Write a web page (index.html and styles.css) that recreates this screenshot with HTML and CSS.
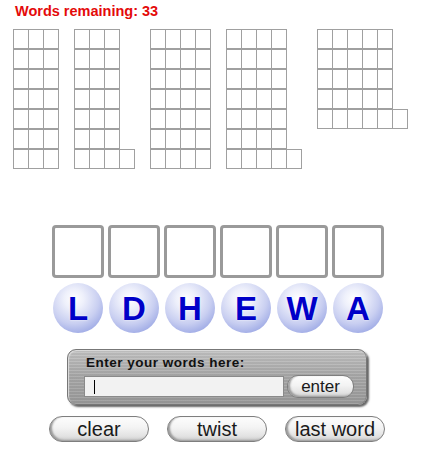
FILE: index.html
```html
<!DOCTYPE html>
<html lang="en">
<head>
    <meta charset="UTF-8">
    <title>Text Twist</title>
    <link rel="stylesheet" href="styles.css">
</head>
<body>
    <div class="status">Words remaining: 33</div>

    <div class="words" id="words"></div>

    <div class="slots">
        <div class="slot"></div>
        <div class="slot"></div>
        <div class="slot"></div>
        <div class="slot"></div>
        <div class="slot"></div>
        <div class="slot"></div>
    </div>

    <div class="balls">
        <div class="ball">L</div>
        <div class="ball">D</div>
        <div class="ball">H</div>
        <div class="ball">E</div>
        <div class="ball">W</div>
        <div class="ball">A</div>
    </div>

    <div class="panel">
        <div class="panel-label">Enter your words here:</div>
        <div class="panel-row">
            <div class="field"><span class="caret"></span></div>
            <button class="pill enter-btn">enter</button>
        </div>
    </div>

    <div class="controls">
        <button class="pill">clear</button>
        <button class="pill">twist</button>
        <button class="pill">last word</button>
    </div>

    <script>
        // word lengths per column, top to bottom
        const columns = [
            [3, 3, 3, 3, 3, 3, 3],
            [3, 3, 3, 3, 3, 3, 4],
            [4, 4, 4, 4, 4, 4, 4],
            [4, 4, 4, 4, 4, 4, 5],
            [5, 5, 5, 5, 6]
        ];
        const wordsEl = document.getElementById('words');
        columns.forEach(col => {
            const colEl = document.createElement('div');
            colEl.className = 'col';
            col.forEach(len => {
                const row = document.createElement('div');
                row.className = 'word';
                for (let i = 0; i < len; i++) {
                    const cell = document.createElement('div');
                    cell.className = 'cell';
                    row.appendChild(cell);
                }
                colEl.appendChild(row);
            });
            wordsEl.appendChild(colEl);
        });
    </script>
</body>
</html>
```

FILE: styles.css
```css
body {
    margin: 0;
    font-family: "Liberation Sans", Arial, sans-serif;
    background: #fff;
}
.status {
    color: #e40a0a;
    font-weight: bold;
    font-size: 14.5px;
    line-height: 16px;
    padding: 3px 0 0 15px;
}
.words {
    display: flex;
    gap: 15px;
    margin: 10px 0 0 13px;
    height: 140px;
}
.col { display: flex; flex-direction: column; align-items: flex-start; }
.word { display: flex; }
.cell {
    width: 16px;
    height: 20px;
    box-sizing: border-box;
    border: 1px solid #a0a0a0;
}
.cell + .cell { margin-left: -1px; }

.slots {
    display: flex;
    justify-content: center;
    gap: 4px;
    margin-top: 56px;
    padding-left: 2px;
}
.slot {
    width: 52px;
    height: 53px;
    box-sizing: border-box;
    border: 3px solid #9a9a9a;
    border-radius: 4px;
}
.balls {
    display: flex;
    justify-content: center;
    gap: 6px;
    margin-top: 5px;
    padding-left: 2px;
}
.ball {
    width: 50px;
    height: 50px;
    border-radius: 50%;
    background: radial-gradient(circle at 42% 32%, #ffffff 0%, #eef0fb 22%, #c9cff1 55%, #96a3e3 85%, #7e8cd8 100%);
    color: #0000c8;
    font-weight: bold;
    font-size: 33px;
    line-height: 52px;
    text-align: center;
    text-shadow: 0 0 2px #fff;
}

.panel {
    width: 300px;
    height: 56px;
    box-sizing: border-box;
    margin: 16px auto 0;
    padding: 5px 0 0 16px;
    border-radius: 9px;
    border: 1px solid #777;
    background:
        repeating-linear-gradient(0deg, rgba(255,255,255,0.08) 0 1px, rgba(0,0,0,0.05) 1px 3px),
        linear-gradient(#c4c4c4, #a9a9a9 50%, #9c9c9c);
    box-shadow: 2px 2px 2px #666, inset 1px 1px 1px #ddd;
}
.panel-label {
    font-weight: bold;
    font-size: 13.5px;
    letter-spacing: 0.5px;
    line-height: 15px;
    color: #111;
    padding-left: 2px;
}
.panel-row {
    display: flex;
    align-items: center;
    margin-top: 5px;
}
.field {
    width: 200px;
    height: 21px;
    box-sizing: border-box;
    background: #f2f2f2;
    border: 1px solid #8a8a8a;
    padding: 3px 0 0 9px;
}
.caret {
    display: block;
    width: 1px;
    height: 14px;
    background: #000;
}
.pill {
    font-family: "Liberation Sans", Arial, sans-serif;
    color: #1a1a1a;
    border: 1px solid #7e7e7e;
    border-radius: 13px;
    background: linear-gradient(#fdfdfd, #f3f3f3 45%, #e2e2e2 80%, #cacaca);
    box-shadow: inset 2px -1px 2px #9a9a9a;
    padding: 0;
    cursor: pointer;
}
.enter-btn {
    width: 67px;
    height: 23px;
    margin-left: 3px;
    font-size: 17px;
    line-height: 21px;
    border-radius: 11px;
}
.controls {
    display: flex;
    justify-content: center;
    gap: 18px;
    margin-top: 11px;
}
.controls .pill {
    width: 100px;
    height: 26px;
    font-size: 20px;
    line-height: 24px;
}
```
